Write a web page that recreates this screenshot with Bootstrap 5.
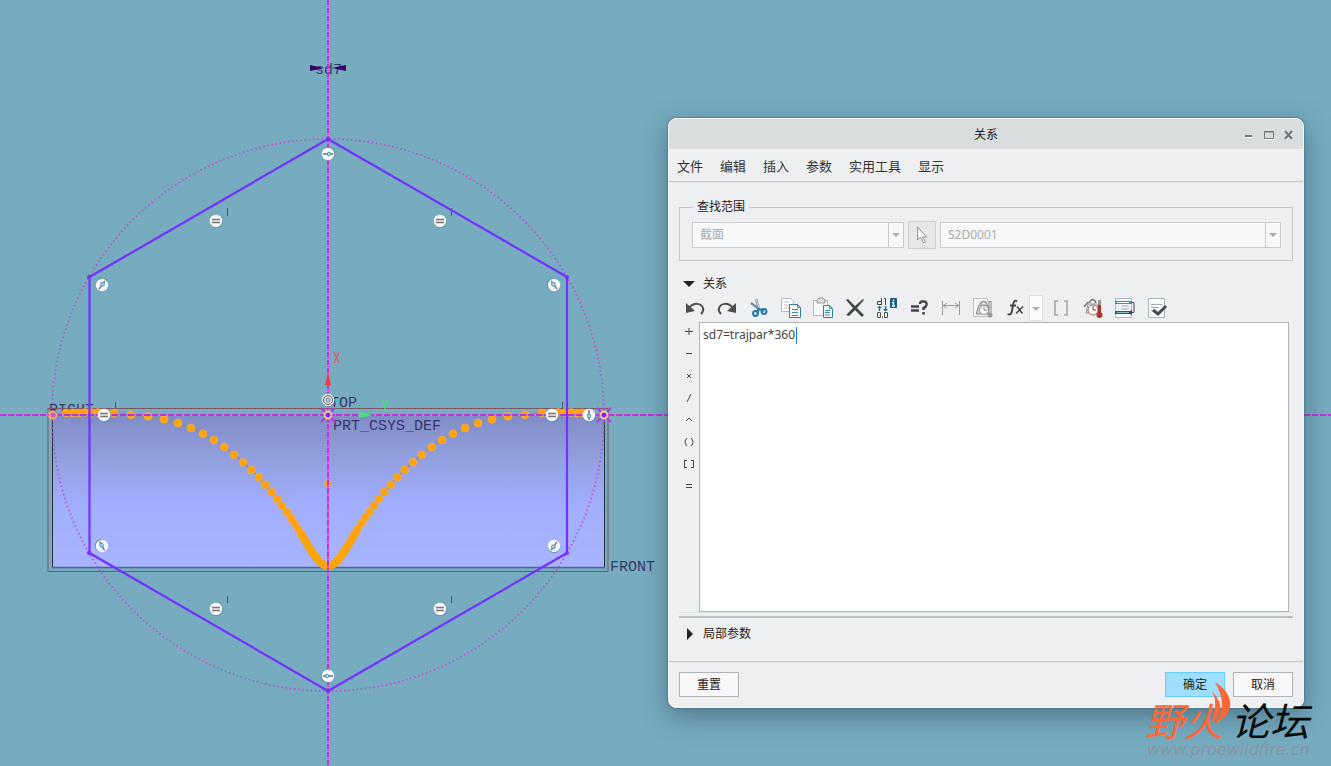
<!DOCTYPE html>
<html lang="zh-CN">
<head>
<meta charset="utf-8">
<meta name="viewport" content="width=device-width, initial-scale=1">
<title>关系</title>
<link href="https://cdn.jsdelivr.net/npm/bootstrap@5.3.0/dist/css/bootstrap.min.css" rel="stylesheet">
<style>
body { font-family: "Noto Sans", "Noto Sans CJK SC", sans-serif; font-size: 12px; line-height: 18px; color: #222; background: #76abc0; }
.workspace { min-height: 100vh; }
.scene { inset: 0; width: 100%; height: 100%; }
.scene text { font-family: "Liberation Mono", monospace; font-size: 15px; fill: #2b1f57; fill-opacity: .85; }
.dialog { top: 118px; right: 27px; width: 636px; max-width: calc(100% - 54px); background: #eeeff1; border: 1px solid #f6f7f8; border-radius: 8px; box-shadow: 0 0 2px rgba(30,60,75,.7), 0 8px 26px rgba(35,65,80,.5); overflow: hidden; }
.titlebar { height: 30px; background: #dadddd; padding: 2px 9px 0; }
.titlebar h1 { font-size: 12px; line-height: 18px; }
.rule { border-bottom: 1px solid #c4c6c9; }
.menus { height: 33px; padding: 2px 8px 0; gap: 17px; font-size: 13px; }
.menus a { color: #333; }
.content { padding: 0 10px; }
.scope { border: 1px solid #c4c6c9; margin-top: 16px; padding: 0 11px 11px 12px; }
.scope legend { width: auto; float: none; font-size: 12px; line-height: 18px; padding: 0 4px; margin: 0 0 5px 1px; }
.combo { height: 26px; border: 1px solid #c9cbcd; background: #f8f8f8; }
.combo select { appearance: none; border: 0; background: none; color: #aaa; width: 100%; height: 100%; padding: 0 7px; opacity: 1; }
.combo svg { width: 15px; border-left: 1px solid #c9cbcd; }
.combo-type { width: 212px; }
.pick { width: 28px; height: 28px; background: #e6e7e9; border: 1px solid #cfd1d3; }
.tool { border: 0; background: none; padding: 0; width: 32px; height: 26px; color: #444; }
.tool-fx { width: 30px; }
.tool-sys { width: 20px; height: 22px; }
.tool-drop { width: 14px; background: #fbfbfb; border: 1px solid #dfe0e2; margin-right: 2px; }
.tools { height: 27px; }
.head { border: 0; background: none; padding: 0 4px; height: 24px; gap: 8px; color: #222; }
.head-open { margin-top: 12px; height: 22px; }
.ops { width: 20px; }
.ops button { border: 0; background: none; padding: 0; height: 22px; }
.expr { height: 290px; border: 1px solid #b1b3b6; background: #fff; margin-right: 4px; }
.expr textarea { width: 100%; height: 100%; border: 0; outline: 0; resize: none; padding: 3px; line-height: 18px; font-size: 12px; color: #444; background: none; display: block; }
.cursor { left: 96px; top: 4px; width: 1px; height: 17px; background: #2482dc; }
.divider { height: 6px; border-top: 1px solid #d9e5e9; border-bottom: 2px solid #bcbec1; }
.foot-rule { padding-top: 11px; }
.foot { padding: 10px; }
.push { width: 60px; height: 25px; border: 1px solid #b0b2b5; background: #f8f8f9; color: #222; padding: 0; }
.push-main { background: #9edfff; border-color: #67ccff; }
.brand { right: 0; bottom: 0; width: 190px; height: 96px; pointer-events: none; }
.brand text { font-family: "Liberation Sans", "Noto Sans CJK SC", sans-serif; font-style: italic; font-size: 39px; }
.brand .site { font-family: "DejaVu Sans", sans-serif; font-size: 16px; fill: #84969f; }
</style>
<script defer src="https://cdn.jsdelivr.net/npm/bootstrap@5.3.0/dist/js/bootstrap.bundle.min.js"></script>
</head>
<body>
<main class="workspace position-relative overflow-hidden">
<svg class="scene position-absolute" role="img" aria-label="草绘">
  <defs>
    <linearGradient id="face" x1="0" y1="0" x2="0" y2="1"><stop offset="0" stop-color="#7f8cc5"/><stop offset=".25" stop-color="#909ddb"/><stop offset=".6" stop-color="#a2afff"/><stop offset="1" stop-color="#a7b5ff"/></linearGradient>
    <marker id="dot" markerUnits="userSpaceOnUse" markerWidth="10" markerHeight="10" refX="5" refY="5"><circle cx="5" cy="5" r="4" fill="#ffa50a" stroke="#f4a67c" stroke-width=".5"/></marker>
    <g id="disc"><circle cx=".5" cy=".8" r="6.3" fill="#56808f" opacity=".7"/><circle r="6.2" fill="#f7f8f8"/></g>
    <g id="equal"><use href="#disc"/><path d="M-4-1.5H4M-4 1.5H4" stroke="#777" stroke-width="1.3"/><path d="M-4 0H4" stroke="#ccc" stroke-width="1.5"/></g>
    <g id="onpt"><use href="#disc"/><path d="M0-5V5" stroke="#777" stroke-width="1.6"/><circle cy="1" r="1.8" fill="#9edceb" stroke="#519bad"/></g>
    <g id="half"><path id="trace" d="M604 415L590 413L583 413L577 413L571 412.500L565 412.500L558 412.500L542 413L525 414.700L508 416.300L492 419.300L478 423L465 428L453 433.700L442 440L431.700 447L422 454.700L413 462.300L404.700 470L397.300 477.300L390.700 484.700L384.300 492L379 499L374 505.700L369.300 512L365.300 517.700L361.700 523L358 528.700L355 533.500" fill="none" stroke="#8d9293" stroke-width="2" marker-start="url(#dot)" marker-mid="url(#dot)" marker-end="url(#dot)"/><path d="M355 533.500L350 542L344 552L338 560Q333 566 328 566" fill="none" stroke="#ffa50a" stroke-width="8" stroke-linejoin="round"/></g>
    <g id="star"><path d="M-7-7L7 7M7-7L-7 7M-7 0H7M0-7V7" stroke="#bd36d8" stroke-width="2"/><circle r="3.500" fill="#7a2cff" stroke="#ffd08a" stroke-width="1.800"/></g>
  </defs>
  <g><text x="49" y="414">RIGHT</text><text x="330" y="407">TOP</text></g>
  <rect x="52.500" y="415" width="552" height="152" fill="url(#face)"/>
  <path d="M52.500 415V567M604.500 415V567" stroke="#24303a" fill="none"/><path d="M52 567.500H605" stroke="#56619a" stroke-width="1.500"/>
  <rect x="48" y="408.500" width="560" height="163" fill="none" stroke="#7a5965"/>
  <text x="333" y="430">PRT_CSYS_DEF</text><text x="610" y="571">FRONT</text>
  <g><text x="315" y="74">sd7</text><path d="M310 65v6l14-3zM346 65v6l-14-3z" fill="#37006b"/></g>
  <path d="M115.500 402v8M562.500 402v8M227.500 208v8M451.500 208v8M227.500 596v7M451.500 596v7" stroke="#3f5878"/>
  <circle cx="328" cy="415" r="276" fill="none" stroke="#b84fd2" stroke-width="1.800" stroke-dasharray="1.400 2.800"/>
  <use href="#half"/><use href="#half" transform="matrix(-1 0 0 1 656 0)"/>
  <circle cx="328" cy="483.500" r="3.500" fill="#ffa50a"/>
  <line x1="0" y1="415" x2="100%" y2="415" stroke="#b07fce" stroke-width="2"/>
  <line x1="0" y1="415" x2="100%" y2="415" stroke="#c034d6" stroke-width="2" stroke-dasharray="6 2"/>
  <line x1="328" y1="0" x2="328" y2="100%" stroke="#b090c8" stroke-width="2"/>
  <line x1="328" y1="0" x2="328" y2="100%" stroke="#c034d6" stroke-width="2" stroke-dasharray="5 1 1 1"/>
  <path d="M328 139L567 277V553L328 691L89.500 553V277Z" fill="none" stroke="#7431ff" stroke-width="2.200"/>
  <g fill="#7431ff"><circle cx="328" cy="139" r="2"/><circle cx="567" cy="277" r="2"/><circle cx="567" cy="553" r="2"/><circle cx="328" cy="691" r="2"/><circle cx="89" cy="553" r="2"/><circle cx="89" cy="277" r="2"/></g>
  <path d="M325 385L328 373L331 385Z" fill="#f83846"/><path d="M334 352l5 11M339 352l-5 11" stroke="#ff4040" fill="none"/>
  <path d="M359 412l14 3l-14 3z" fill="#46e56a"/><path d="M382 400l3 5l3-5M385 405v6" stroke="#3dec68" stroke-width="1.300" fill="none"/>
  <path d="M334 400h5l-5 11h5" stroke="#36d7ed" fill="none"/>
  <use href="#star" x="328" y="415"/><use href="#star" x="604" y="415"/>
  <circle cx="53" cy="415" r="3.500" fill="#bd5ed0" stroke="#ffa56a" stroke-width="1.800"/>
  <use href="#disc" x="328" y="400"/><circle cx="328" cy="400" r="4.500" fill="#dcebed" stroke="#555"/><circle cx="328" cy="400" r="2" fill="#acdce8" stroke="#777"/>
  <use href="#equal" x="216" y="221"/><use href="#equal" x="440" y="221"/><use href="#equal" x="216" y="609"/><use href="#equal" x="440" y="609"/><use href="#equal" x="104" y="415"/><use href="#equal" x="552" y="415"/>
  <use href="#onpt" transform="translate(589 415)"/><use href="#onpt" transform="translate(328 154) rotate(-90)"/><use href="#onpt" transform="translate(328 676) rotate(90)"/><use href="#onpt" transform="translate(102 285) rotate(215)"/><use href="#onpt" transform="translate(554 285) rotate(145)"/><use href="#onpt" transform="translate(102 546) rotate(150)"/><use href="#onpt" transform="translate(554 546) rotate(35)"/>
</svg>

<section class="dialog position-absolute" role="dialog" aria-labelledby="dialogTitle">
  <header class="titlebar position-relative d-flex align-items-center justify-content-center">
    <h1 id="dialogTitle" class="m-0 fw-normal">关系</h1>
    <div class="position-absolute end-0 top-0 d-flex pe-1 pt-1">
      <button class="tool tool-sys" aria-label="最小化"><svg width="12" height="12"><path d="M2 7.500h7" stroke="#fff" stroke-width="3"/><path d="M2 7h7" stroke="#77797d" stroke-width="2"/></svg></button>
      <button class="tool tool-sys" aria-label="最大化"><svg width="12" height="12"><path d="M1 10.500h10" stroke="#fff"/><path d="M1.500 2.500h9v7h-9zM1 3h10" fill="none" stroke="#77797d"/></svg></button>
      <button class="tool tool-sys" aria-label="关闭"><svg width="12" height="12"><path d="M3 3l6 8M9 3l-6 8" stroke="#fff" stroke-width="2"/><path d="M2 2l7 8M9 2l-7 8" stroke="#737578" stroke-width="2.200"/></svg></button>
    </div>
  </header>
  <nav class="menus rule d-flex align-items-center">
    <a class="text-decoration-none" href="#">文件</a><a class="text-decoration-none" href="#">编辑</a><a class="text-decoration-none" href="#">插入</a><a class="text-decoration-none" href="#">参数</a><a class="text-decoration-none" href="#">实用工具</a><a class="text-decoration-none" href="#">显示</a>
  </nav>
  <div class="content">
    <fieldset class="scope">
      <legend>查找范围</legend>
      <div class="d-flex align-items-center gap-1">
        <div class="combo combo-type d-flex"><select aria-label="对象类型" disabled><option>截面</option></select><svg class="flex-shrink-0" height="24"><path d="M3 10h8l-4 4z" fill="#aaa"/></svg></div>
        <button class="pick p-0 d-flex align-items-center justify-content-center" disabled aria-label="选择"><svg width="14" height="20"><path d="M2.500 2v13l3-3l3 6l2-1l-3-5h4z" fill="#f5f5f5" stroke="#929497"/></svg></button>
        <div class="combo d-flex flex-grow-1"><select aria-label="对象" disabled><option>S2D0001</option></select><svg class="flex-shrink-0" height="24"><path d="M3 10h8l-4 4z" fill="#aaa"/></svg></div>
      </div>
    </fieldset>
    <button class="head head-open d-flex align-items-center" aria-expanded="true"><svg width="12" height="8"><path d="M0 1h12L6 7z" fill="#222"/></svg>关系</button>
    <div class="tools d-flex" role="toolbar" aria-label="关系工具">
      <button class="tool" aria-label="撤消"><svg width="22" height="22" fill="none"><path d="M2 6v10l9-2z" fill="#4b4f50"/><path d="M5 11C10 5 17 6 19 11Q20 14 17 17" stroke="#4b4f50" stroke-width="2"/></svg></button>
      <button class="tool" aria-label="重做"><svg width="22" height="22" fill="none"><path d="M20 6v10l-9-2z" fill="#4b4f50"/><path d="M17 11C12 5 5 6 3 11Q2 14 5 17" stroke="#4b4f50" stroke-width="2"/></svg></button>
      <button class="tool" aria-label="剪切"><svg width="22" height="22" fill="none"><path d="M8 2l3 10M3 6l8 6" stroke="#77919c" stroke-width="2.400"/><path d="M8 2l3 9" stroke="#d9e0e2"/><path d="M11 11l-2 5M11 12l5 2" stroke="#247aa0" stroke-width="2.400"/><circle cx="7.500" cy="16.500" r="2.400" stroke="#247aa0" stroke-width="2"/><circle cx="16" cy="14.500" r="2.400" stroke="#247aa0" stroke-width="2"/></svg></button>
      <button class="tool" aria-label="复制"><svg width="22" height="22" fill="none"><path d="M1.500 1.500h9l3 3v10h-12z" fill="#fff" stroke="#b7babd"/><path d="M4 5h5M4 8h7M4 11h5" stroke="#bbb"/><path d="M9.500 7.500h8l3 3v10h-11z" fill="#fff" stroke="#337f9f"/><path d="M17.500 7.500v3h3M12 12.500h6M12 15.500h6M12 18.500h6" stroke="#348fb3"/></svg></button>
      <button class="tool" aria-label="粘贴"><svg width="22" height="22" fill="none"><path d="M1.500 3.500h14v15h-14z" fill="#fafafa" stroke="#b5b5b5"/><path d="M5 6V3l2-2h4l2 2v3z" fill="#ddd" stroke="#999"/><path d="M11.500 8.500h6l3 3v9h-9z" fill="#fff" stroke="#337f9f"/><path d="M17.500 8.500v3h3M13 13.500h5M13 15.500h5M13 18h5" stroke="#348fb3"/></svg></button>
      <button class="tool" aria-label="删除"><svg width="22" height="22" fill="none"><path d="M2 3l2-1l7 7l8-7l1 1l-7 8l7 7l-2 2l-7-7l-6 6l-3-1l7-7z" fill="#444749"/></svg></button>
      <button class="tool" aria-label="切换尺寸"><svg width="22" height="22" fill="none"><path d="M5.500 1v7M5.500 4.500h-4v3h4M8 1.500h1.500V8" stroke="#444"/><path d="M3.500 9v5M9.500 14V9" stroke="#137497" stroke-width="1.400"/><path d="M1 11h5L3.500 9zM7 12h5l-2.500 2.500z" fill="#137497"/><path d="M1.500 15.500h3v5h-3zM8.500 15.500h3v5h-3zM6.500 19.500v1.500" stroke="#555"/><rect x="14" y="1" width="7" height="10" rx="1" fill="#145e80"/><path d="M17.500 2.500v1.500M16 5.500h1.500v3M16 9h3" stroke="#fff" stroke-width="1.300"/></svg></button>
      <button class="tool" aria-label="评估"><svg width="22" height="22" fill="none"><path d="M3 9.500h8M3 13.500h8" stroke="#444" stroke-width="2.500"/><path d="M12 7Q12 4 15 4.500Q19 4 18.500 8Q18 10 15.500 11V13M15.500 15v2.500" stroke="#444" stroke-width="2.500"/></svg></button>
      <button class="tool" aria-label="尺寸"><svg width="22" height="22" fill="none"><path d="M2.500 4v14M19.500 4v14M3 8.500h16M7 6L3 8.500L7 11M15 6l4 2.500L15 11" stroke="#9b9d9f"/></svg></button>
      <button class="tool" disabled aria-label="单位"><svg width="22" height="22" fill="none"><path d="M1.500 1.500h14v3M1.500 1.500v18h16" fill="#f7fafa" stroke="#b8c4c8"/><path d="M4 17l3-9h9l2 9z" fill="#d0d2d3" stroke="#888"/><path d="M8 7Q12 2 15 7" stroke="#888" stroke-width="1.500"/><circle cx="12" cy="13" r="4.500" fill="#f6f6f6" stroke="#999"/><path d="M12 10v3h3" stroke="#888"/><path d="M18 4v14" stroke="#888" stroke-width="3"/><path d="M18 5v12" stroke="#eee"/><circle cx="18" cy="18" r="2.500" fill="#999"/></svg></button>
      <button class="tool tool-fx" aria-label="函数"><svg width="22" height="22" fill="none"><path d="M14 4.500Q11 2 10 8L9 14Q8 19 4.500 17M7 8.500h6" stroke="#444" stroke-width="1.900"/><path d="M14 9.500l5.500 7M20 9.500l-7 7" stroke="#444" stroke-width="1.500"/></svg></button>
      <button class="tool tool-drop" aria-label="更多函数"><svg width="10" height="10"><path d="M1 3h8L5 7z" fill="#b1b1b1"/></svg></button>
      <button class="tool" disabled aria-label="括号"><svg width="22" height="22" fill="none"><path d="M8 4H5v14h3M14 4h3v14h-3" stroke="#a5a7a9" stroke-width="1.600"/></svg></button>
      <button class="tool" aria-label="测量"><svg width="22" height="22" fill="none"><path d="M4 16l2-9h9l3 9z" fill="#e0e1e1" stroke="#999"/><path d="M2 10l4-5M7 6Q11-1 14 6" stroke="#777" stroke-width="1.500"/><circle cx="11" cy="13" r="5" fill="#fafafa" stroke="#a4665c"/><path d="M11 9v4h3" stroke="#555"/><path d="M17.500 3v15" stroke="#999" stroke-width="3"/><path d="M17.500 8v10" stroke="#b92e28" stroke-width="3"/><circle cx="17.500" cy="18" r="3" fill="#a93730"/></svg></button>
      <button class="tool" aria-label="排序"><svg width="22" height="22" fill="none"><path d="M1.500 1.500h16v19h-16z" fill="#f5f8f9" stroke="#adb8bd"/><path d="M1 5.500h17" stroke="#2597d2" stroke-width="3"/><path d="M3 5.500h12" stroke="#fff"/><path d="M4 9h1M7 9h8M4 12h1M7 12h8" stroke="#a2aaad"/><path d="M1 15.500h16" stroke="#126580" stroke-width="3"/><path d="M3 15.500h12" stroke="#83becf"/><path d="M18 5.500h2v10h-3" stroke="#444"/><path d="M15 15.500l3-3v6z" fill="#444"/></svg></button>
      <button class="tool" aria-label="校验"><svg width="22" height="22" fill="none"><path d="M2.500 1.500h16v19h-16z" fill="#f6fafb" stroke="#a9b6bc"/><path d="M5 7.500h11M5 10.500h8M5 13.500h3" stroke="#aaa" stroke-width="1.200"/><path d="M7 13l5 4l8-8" stroke="#454b4f" stroke-width="3"/></svg></button>
    </div>
    <div class="d-flex">
      <div class="ops d-flex flex-column" aria-label="运算符">
        <button aria-label="加" class="d-flex align-items-center justify-content-center"><svg width="12" height="12"><path d="M2 4.500h8M6 1v7" stroke="#444"/></svg></button>
        <button aria-label="减" class="d-flex align-items-center justify-content-center"><svg width="12" height="12"><path d="M3 4.500h6" stroke="#444"/></svg></button>
        <button aria-label="乘" class="d-flex align-items-center justify-content-center"><svg width="12" height="12"><path d="M4 3l4 4M8 3l-4 4" stroke="#444"/></svg></button>
        <button aria-label="除" class="d-flex align-items-center justify-content-center"><svg width="12" height="12"><path d="M8 1l-4 8" stroke="#444"/></svg></button>
        <button aria-label="幂" class="d-flex align-items-center justify-content-center"><svg width="12" height="12" fill="none"><path d="M3 6l3-3l3 3" stroke="#444"/></svg></button>
        <button aria-label="圆括号" class="d-flex align-items-center justify-content-center"><svg width="12" height="12" fill="none"><path d="M4 1Q0 5 4 9M8 1Q12 5 8 9" stroke="#444"/></svg></button>
        <button aria-label="方括号" class="d-flex align-items-center justify-content-center"><svg width="12" height="12" fill="none"><path d="M4 1.500H1.500v7H4M8 1.500h2.500v7H8" stroke="#444"/></svg></button>
        <button aria-label="等于" class="d-flex align-items-center justify-content-center"><svg width="12" height="12"><path d="M3 3.500h6M3 6.500h6" stroke="#444"/></svg></button>
      </div>
      <div class="expr flex-grow-1 position-relative"><textarea aria-label="关系" spellcheck="false">sd7=trajpar*360</textarea><span class="cursor position-absolute"></span></div>
    </div>
    <div class="divider"></div>
    <button class="head d-flex align-items-center my-1" aria-expanded="false"><svg width="12" height="12"><path d="M4 0v12l6-6z" fill="#222"/></svg>局部参数</button>
  </div>
  <div class="rule foot-rule"></div>
  <footer class="foot d-flex gap-2">
    <button class="push me-auto">重置</button><button class="push push-main">确定</button><button class="push">取消</button>
  </footer>
</section>

<svg class="brand position-absolute" role="img" aria-label="野火论坛">
  <text x="4" y="66" fill="#ff6735">野火</text><text x="90" y="66" fill="#080b0c">论坛</text>
  <path d="M74 12Q91 23 89 37Q87 48 73 53Q81 45 81 36Q81 24 74 12ZM71 21Q82 33 79 42Q76 49 70 53Q73 44 74 37Q75 29 71 21Z" fill="#ff6735"/>
  <text class="site" x="6" y="85">www.proewildfire.cn</text>
</svg>
</main>
</body>
</html>
